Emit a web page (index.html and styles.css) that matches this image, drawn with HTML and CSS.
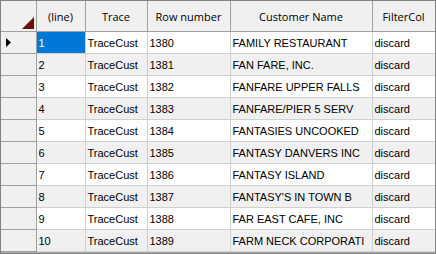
FILE: index.html
```html
<!DOCTYPE html>
<html>
<head>
<meta charset="utf-8">
<link rel="stylesheet" href="styles.css">
</head>
<body>
<div class="grid">
<table>
<colgroup>
<col class="c0"><col class="c1"><col class="c2"><col class="c3"><col class="c4"><col class="c5">
</colgroup>
<thead>
<tr>
<th class="corner"><svg class="tri" width="12" height="12" viewBox="0 0 12 12"><polygon points="12,0 12,12 0,12" fill="#6e0b0b"/></svg></th>
<th>(line)</th><th>Trace</th><th>Row number</th><th>Customer Name</th><th>FilterCol</th>
</tr>
</thead>
<tbody>
<tr><td class="rh"><svg class="arrow" width="5" height="9" viewBox="0 0 5 9"><polygon points="0,0 5,4.5 0,9" fill="#000"/></svg></td><td class="sel">1</td><td>TraceCust</td><td>1380</td><td>FAMILY RESTAURANT</td><td>discard</td></tr>
<tr><td class="rh"></td><td>2</td><td>TraceCust</td><td>1381</td><td>FAN FARE, INC.</td><td>discard</td></tr>
<tr><td class="rh"></td><td>3</td><td>TraceCust</td><td>1382</td><td>FANFARE UPPER FALLS</td><td>discard</td></tr>
<tr><td class="rh"></td><td>4</td><td>TraceCust</td><td>1383</td><td>FANFARE/PIER 5 SERV</td><td>discard</td></tr>
<tr><td class="rh"></td><td>5</td><td>TraceCust</td><td>1384</td><td>FANTASIES UNCOOKED</td><td>discard</td></tr>
<tr><td class="rh"></td><td>6</td><td>TraceCust</td><td>1385</td><td>FANTASY DANVERS INC</td><td>discard</td></tr>
<tr><td class="rh"></td><td>7</td><td>TraceCust</td><td>1386</td><td>FANTASY ISLAND</td><td>discard</td></tr>
<tr><td class="rh"></td><td>8</td><td>TraceCust</td><td>1387</td><td>FANTASY'S IN TOWN B</td><td>discard</td></tr>
<tr><td class="rh"></td><td>9</td><td>TraceCust</td><td>1388</td><td>FAR EAST CAFE, INC</td><td>discard</td></tr>
<tr><td class="rh"></td><td>10</td><td>TraceCust</td><td>1389</td><td>FARM NECK CORPORATI</td><td>discard</td></tr>
</tbody>
</table>
</div>
</body>
</html>
```
FILE: styles.css
```css
html, body {
  margin: 0;
  padding: 0;
  background: #ababab;
}
.grid {
  width: 434px;
  height: 252px;
  border: 1px solid #828282;
  background: #ababab;
  overflow: hidden;
}
table {
  border-collapse: collapse;
  table-layout: fixed;
  width: 434px;
}
.c0 { width: 35px; }
.c1 { width: 49px; }
.c2 { width: 62px; }
.c3 { width: 83px; }
.c4 { width: 142px; }
.c5 { width: 63px; }
th {
  height: 30px;
  padding: 0;
  background: #f0f0f0;
  border-right: 1px solid #a0a0a0;
  border-bottom: 1px solid #a0a0a0;
  font-family: "Open Sans", "Noto Sans", sans-serif;
  font-size: 11px;
  font-weight: normal;
  color: #000;
  text-align: center;
  vertical-align: middle;
  white-space: nowrap;
  overflow: hidden;
}
th.corner {
  position: relative;
}
.tri {
  position: absolute;
  right: 2px;
  bottom: 2px;
}
td {
  height: 21px;
  padding: 0 0 0 2px;
  border-right: 1px solid #d0d0d0;
  border-bottom: 1px solid #d0d0d0;
  font-family: "Liberation Sans", Arial, sans-serif;
  font-size: 11px;
  color: #000;
  white-space: nowrap;
  overflow: hidden;
  background: #fff;
}
tbody tr:nth-child(even) td {
  background: #f0f0f0;
}
td.rh, tbody tr:nth-child(even) td.rh {
  background: #f0f0f0;
  border-right: 1px solid #a0a0a0;
  border-bottom: 1px solid #a0a0a0;
  padding: 0 0 0 5px;
  vertical-align: middle;
}
.arrow { display: block; }
td.sel {
  background: #0078d7;
  color: #fff;
}
```
